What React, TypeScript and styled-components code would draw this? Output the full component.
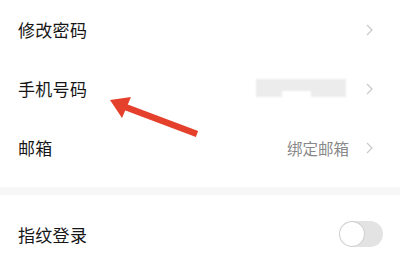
import React from "react";
import styled, { createGlobalStyle } from "styled-components";

const Global = createGlobalStyle`
  html, body { margin: 0; padding: 0; background: #ffffff; }
  body { font-family: "Noto Sans CJK SC", "Noto Sans", sans-serif; }
`;

const Page = styled.div`
  position: relative;
  width: 400px;
  height: 260px;
  overflow: hidden;
  background: #ffffff;
`;

const Row = styled.div<{ $h?: number }>`
  display: flex;
  align-items: center;
  height: ${(p) => p.$h ?? 59}px;
  padding: 0 17px 0 18px;
`;

const Label = styled.div`
  flex: 1;
  font-size: 17px;
  color: #161616;
  letter-spacing: 0.3px;
`;

const Value = styled.div`
  font-size: 15.5px;
  color: #888888;
  margin-right: 17px;
`;

const Chevron = styled.svg`
  width: 7px;
  height: 12px;
  margin-right: 10px;
`;

const Blur = styled.div`
  position: relative;
  width: 90px;
  height: 20px;
  margin-right: 20px;
  filter: blur(1.2px);
`;

const BlurTop = styled.div`
  position: absolute;
  left: 0;
  right: 0;
  top: 0;
  height: 12px;
  background: #ececec;
`;

const BlurBottom = styled.div<{ $l: number; $w: number }>`
  position: absolute;
  left: ${(p) => p.$l}px;
  width: ${(p) => p.$w}px;
  top: 12px;
  height: 6px;
  background: #ececec;
`;

const Spacer = styled.div`
  height: 10px;
`;

const Divider = styled.div`
  height: 8px;
  background: #f7f7f7;
`;

const Toggle = styled.div`
  width: 44px;
  height: 26px;
  border-radius: 13px;
  background: #e3e3e3;
  display: flex;
  align-items: center;
  padding: 0 1px;
  box-sizing: border-box;
`;

const Knob = styled.div`
  width: 24px;
  height: 24px;
  border-radius: 50%;
  background: #ffffff;
  box-shadow: 0 0 1px 0.5px rgba(0, 0, 0, 0.18);
`;

const Arrow = styled.svg`
  position: absolute;
  left: 0;
  top: 0;
  width: 400px;
  height: 260px;
  pointer-events: none;
`;

const Chev = () => (
  <Chevron viewBox="0 0 7 12">
    <path d="M1 1 L6 6 L1 11" fill="none" stroke="#c9c9c9" strokeWidth="1.2" />
  </Chevron>
);

export default function App() {
  return (
    <Page>
      <Global />
      <Row>
        <Label>修改密码</Label>
        <Chev />
      </Row>
      <Row>
        <Label>手机号码</Label>
        <Blur>
          <BlurTop />
          <BlurBottom $l={0} $w={26} />
          <BlurBottom $l={55} $w={35} />
        </Blur>
        <Chev />
      </Row>
      <Row>
        <Label>邮箱</Label>
        <Value>绑定邮箱</Value>
        <Chev />
      </Row>
      <Spacer />
      <Divider />
      <Row $h={78}>
        <Label>指纹登录</Label>
        <Toggle>
          <Knob />
        </Toggle>
      </Row>
      <Arrow viewBox="0 0 400 260">
        <line x1="197" y1="134" x2="120" y2="105" stroke="#e4402c" strokeWidth="6.5" strokeLinecap="butt" />
        <polygon points="110,100 131,97 122,118" fill="#e4402c" />
      </Arrow>
    </Page>
  );
}
